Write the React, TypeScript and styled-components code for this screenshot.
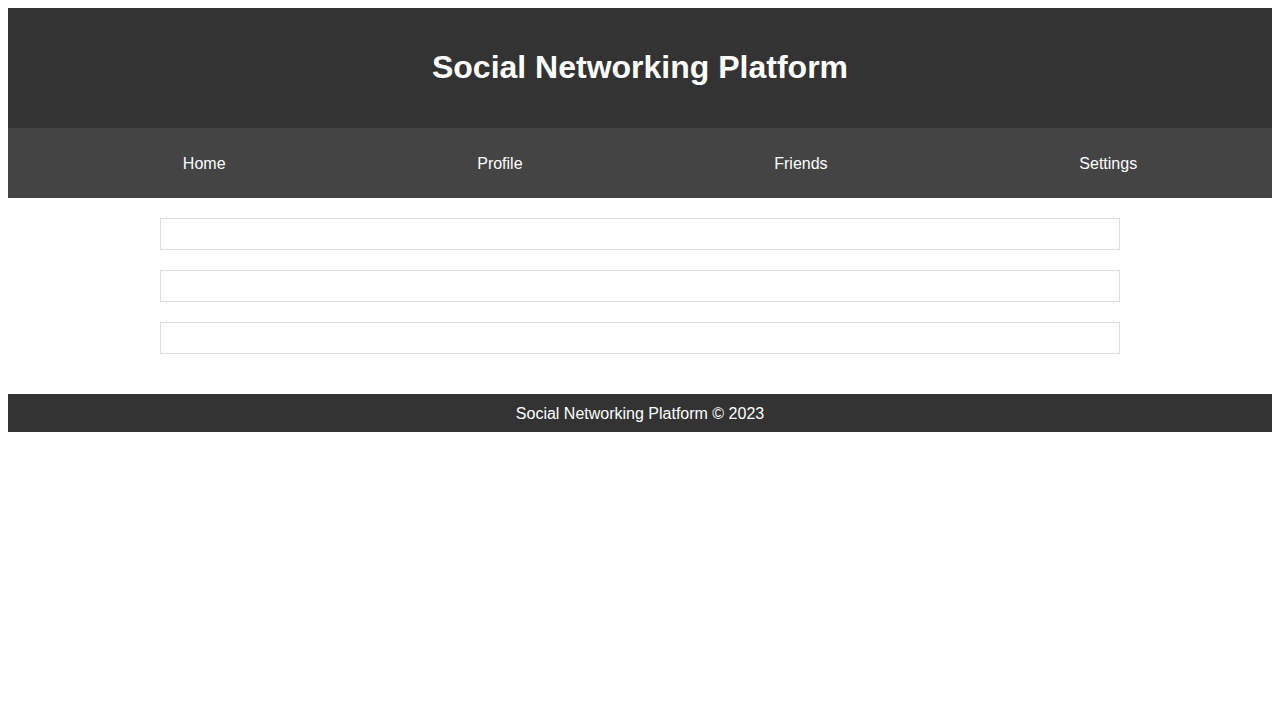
import React from "react";
import styled, { createGlobalStyle } from "styled-components";

const GlobalStyle = createGlobalStyle`
  body {
    margin: 8px;
    font-family: "Liberation Sans", Arial, sans-serif;
    background: #fff;
  }
  * { box-sizing: border-box; }
`;

const Header = styled.header`
  background: #333;
  color: #fff;
  padding: 20px;
  text-align: center;
`;

const Title = styled.h1`
  margin: 21.44px 0;
  font-size: 32px;
  font-weight: bold;
`;

const Nav = styled.nav`
  background: #444;
  padding: 27px 9px 25px;
`;

const NavList = styled.ul`
  list-style: none;
  margin: 0;
  padding: 0 0 0 40px;
  display: flex;
  justify-content: space-around;
`;

const NavItem = styled.li`
  color: #fff;
  font-size: 16px;
  line-height: 18px;
`;

const Main = styled.main`
  padding: 20px;
`;

const Post = styled.div`
  max-width: 960px;
  margin: 0 auto 20px;
  border: 1px solid #ddd;
  padding: 15px;
`;

const Footer = styled.footer`
  background: #333;
  color: #fff;
  text-align: center;
  padding: 11px 10px 9px;
  font-size: 16px;
  line-height: 18px;
`;

export default function App() {
  return (
    <>
      <GlobalStyle />
      <Header>
        <Title>Social Networking Platform</Title>
      </Header>
      <Nav>
        <NavList>
          {["Home", "Profile", "Friends", "Settings"].map((t) => (
            <NavItem key={t}>{t}</NavItem>
          ))}
        </NavList>
      </Nav>
      <Main>
        <Post />
        <Post />
        <Post />
      </Main>
      <Footer>Social Networking Platform © 2023</Footer>
    </>
  );
}
